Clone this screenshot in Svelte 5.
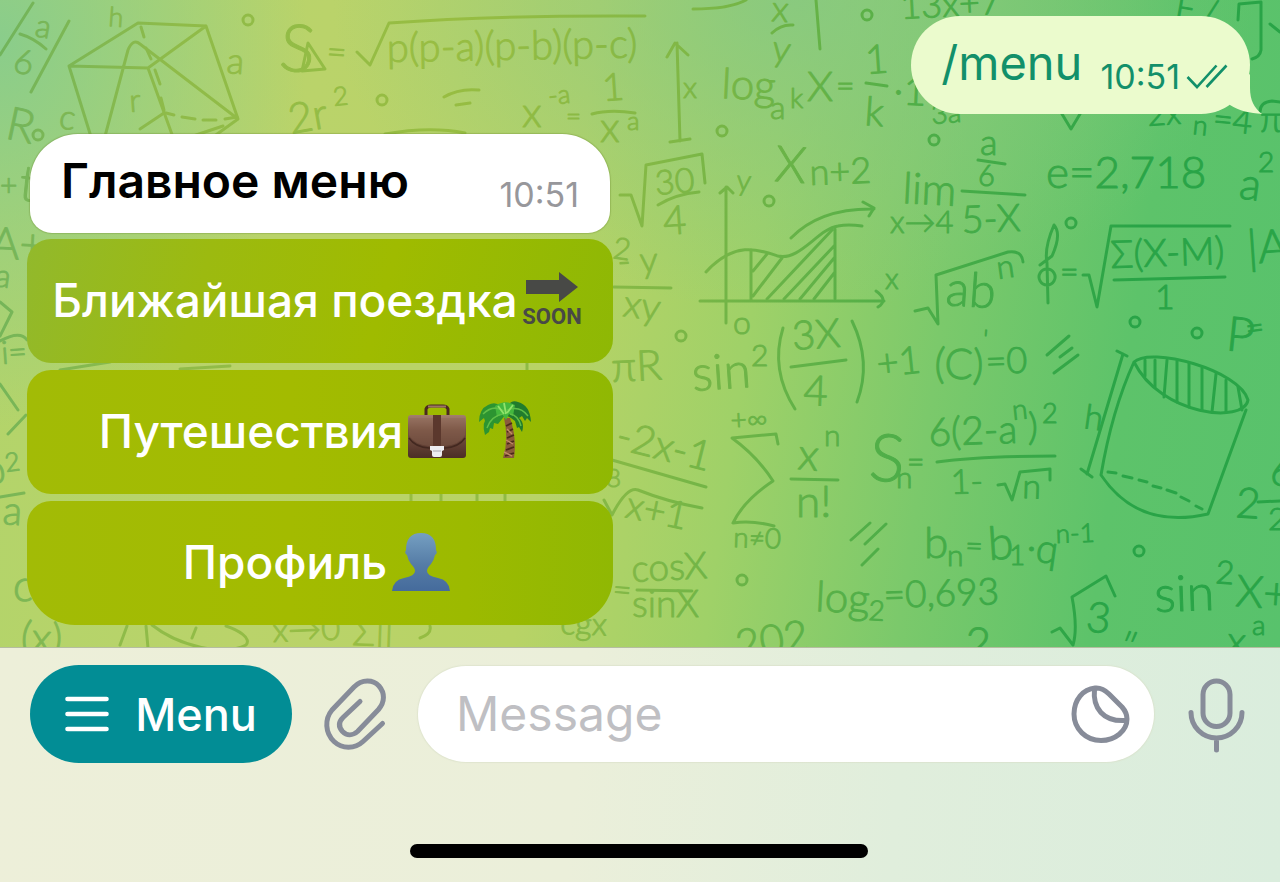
<script>
  let draft = $state('');

  // Formulas scattered over the chat wallpaper: x, baseline y, size, text, tilt
  const formulas = [
    [34, 36, 32, 'a', 10], [12, 72, 34, '6', 10], [4, 138, 46, 'R', 12], [58, 128, 34, 'c', 8],
    [108, 26, 27, 'h', 4], [130, 112, 32, 'r', -4], [226, 73, 36, 'a', 4], [278, 70, 66, 'S', 5],
    [326, 63, 34, '=', 4], [387, 62, 40, 'p(p-a)(p-b)(p-c)', -1],
    [291, 134, 42, '2r', -10], [334, 106, 26, '2', -6],
    [522, 127, 42, 'x', 0], [549, 105, 26, '-a', -6], [566, 125, 26, '=', 0], [603, 101, 38, '1', -4],
    [600, 142, 42, 'x', 0], [627, 130, 26, 'a', 0], [683, 98, 30, 'x', 0],
    [721, 98, 42, 'log', 3], [770, 119, 32, 'a', 0], [790, 108, 28, 'k', 0], [807, 101, 42, 'X', 0],
    [836, 97, 32, '=', 0], [866, 74, 40, '1', -4], [864, 125, 40, 'k', 4], [893, 104, 40, '·10', 3],
    [771, 21, 36, 'x', 4], [771, 60, 36, 'y', 8], [901, 19, 36, '13x+7', -3],
    [932, 124, 28, '3a', -4], [1148, 126, 32, '2x', -4], [1192, 134, 27, 'n', 6], [1212, 130, 34, '=4', 6], [1260, 132, 36, 'π', 0],
    [1174, 18, 34, 'F /', 10], [656, 195, 34, '30', -5], [664, 235, 40, '4', -4],
    [774, 181, 50, 'X', 4], [810, 185, 36, 'n+2', -2], [736, 190, 29, 'y', 4],
    [902, 203, 43, 'lim', 3], [890, 233, 31, 'x→4', 0], [980, 155, 36, 'a', 0], [978, 186, 29, '6', 0],
    [962, 233, 38, '5-X', -2], [1046, 188, 44, 'e=2,718', 0], [1238, 198, 44, 'a', 8], [1258, 172, 28, '2 -', 0],
    [612, 258, 30, '2', 8], [618, 274, 36, '- y', -3], [622, 316, 38, 'xy', 8],
    [733, 334, 32, 'o', 0], [885, 289, 29, 'x', 0], [693, 391, 49, 'sin', -4], [751, 366, 30, '2', 0],
    [793, 350, 40, '3X', -4], [803, 405, 42, '4', 2], [878, 377, 38, '+1', -6],
    [934, 378, 42, '(C)', 2], [982, 348, 26, "'", 5], [986, 374, 36, '=0', -2],
    [945, 305, 48, 'ab', 4], [998, 279, 32, 'n', -8], [1060, 283, 32, '=', 0],
    [1111, 268, 38, 'Σ(X-M)', -2], [1155, 309, 34, '1', 0], [1248, 264, 46, '|A', -4],
    [1225, 350, 48, 'P', 6], [1247, 340, 32, '=', -8], [1083, 428, 34, 'h', 8], [612, 382, 42, 'πR', -3],
    [614, 448, 41, '-2x-1', 14], [606, 487, 26, '8', 0], [624, 517, 38, 'x+1', 12],
    [731, 430, 28, '+∞', -3], [797, 469, 44, 'x', 5], [824, 446, 30, 'n', 0], [796, 517, 44, 'n!', 0],
    [733, 547, 28, 'n≠0', 2], [868, 480, 66, 'S', 4], [896, 488, 30, 'n', 0], [907, 472, 30, '=', 0],
    [929, 446, 39, '6(2-a', -2], [1013, 420, 28, 'n', -6], [1028, 440, 38, ')', 0], [1042, 423, 27, '2', 0],
    [951, 494, 34, '1-', -2], [1022, 498, 34, 'n', 2],
    [924, 558, 44, 'b', 0], [947, 566, 30, 'n', 0], [965, 556, 30, '=', 2], [989, 560, 46, 'b', -4], [1009, 565, 28, '1', 0],
    [1025, 560, 40, '·q', 8], [1056, 543, 26, 'n-1', -2],
    [815, 611, 42, 'log', 3], [868, 620, 28, '2', 3], [884, 608, 37, '=0,693', -2],
    [1155, 612, 50, 'sin', -2], [1215, 583, 32, '2', 4], [1235, 606, 44, 'X+', 4],
    [1085, 631, 42, '3', 6], [1226, 654, 40, 'x', 5], [1252, 635, 28, 'a', 0], [964, 658, 44, '2', 4], [738, 660, 42, '202', -9],
    [1235, 517, 42, '2', 4], [1268, 530, 32, '2', 0], [1270, 486, 40, '6', 0],
    [632, 582, 37, 'cosX', -3], [612, 600, 32, '=', 5], [632, 617, 37, 'sinX', 0],
    [0, 196, 30, '+', 0], [18, 200, 50, 't', 6], [-10, 258, 44, 'A+', 3], [-6, 286, 32, 'a', 8], [2, 364, 32, 'i=', -4],
    [-14, 486, 40, 'b', -12], [6, 472, 26, '2', -8], [2, 524, 40, 'a', 4], [12, 600, 44, 'c', 5],
    [20, 651, 42, '(x)', 4], [273, 642, 33, 'x→0', -2], [352, 645, 38, 'Σ||', 2], [560, 634, 32, 'cgx', 2],
    [1120, 656, 32, '″', 8]
  ];

  const dots = [
    [248, 20, 5], [38, 135, 5], [382, 100, 5], [722, 131, 5], [769, 201, 5], [681, 336, 5], [867, 15, 5],
    [934, 140, 5], [1071, 223, 5], [1135, 322, 5], [1197, 333, 5], [1139, 551, 5], [742, 580, 5]
  ];

  const strokes = [
    // ratio bars on the left edge and the prism
    'M33 3 L0 55 M69 21 L31 92 M20 34 Q34 38 46 49',
    'M69 66 L138 23 L206 26 L238 119 L195 150 M69 66 L92 140 M69 66 L148 68 L206 26 M148 68 L174 140 M104 140 L128 50 Q133 38 140 44 L238 119',
    'M141 27 L144 37 M146 48 L151 59 M155 70 L160 84 M161 98 L164 110 M164 113 L140 129 M166 113 L174 115 M182 117 L195 119 M203 120 L216 120 M225 119 L237 117 M223 126 L193 136',
    // roots, fraction bars and arrows in the upper band
    'M308 43 L302 71 L325 69 Z M357 52 L370 65 L389 23 Q500 15 645 16',
    'M385 134 Q430 126 465 133 M444 97 Q459 88 479 90 M456 105 L470 103 M592 114 Q610 109 635 113',
    'M677 43 L680 141 M667 57 L675 43 L688 55 M670 142 L690 139 M772 33 Q781 24 793 25 M693 9 Q730 9 746 0 M816 0 L820 49',
    'M866 83 L887 86 M1238 20 L1239 4 L1261 2 V50 Q1260 57 1252 59 M1270 24 L1280 32',
    'M1062 114 L1071 129 L1080 114 M1260 112 Q1260 102 1272 101 L1280 102',
    'M620 195 L631 195 L642 226 L646 165 L702 154 L705 183 M658 205 Q676 194 699 192',
    'M978 160 L1005 164 M962 191 L1025 195',
    // shaded area under a curve
    'M726 323 V187 M720 193 L727 187 L733 193 M700 301 H884 M876 291 Q889 300 878 307',
    'M706 272 C735 240 760 250 778 256 C800 261 818 229 838 226 Q848 224 862 226 M791 238 Q820 208 874 209 M863 202 L874 208 L869 216',
    'M751 250 V300 M835 229 V299 M753 271 L767 254 M753 296 L782 258 M767 299 L832 230 M784 299 L835 245 M800 299 L835 257 M814 299 L835 272',
    // roots and brackets at the right
    'M915 311 L928 308 L938 324 L936 275 L1008 252 Q1022 250 1023 262 M1048 303 L1047 263 Q1044 248 1054 225 Q1062 234 1052 256 L1040 265 M1047 269 a8 8 0 1 0 .1 0',
    'M1083 275 L1089 275 L1097 307 L1111 226 L1230 226 M1114 280 L1225 277',
    'M783 328 Q770 370 795 409 M852 321 Q872 362 857 402 M791 367 L846 360',
    'M1047 355 L1069 336 M1060 357 L1072 348 M1054 373 L1078 355',
    'M614 287 L671 288',
    // cylinder
    'M1134 362 C1150 346 1240 370 1248 400 C1244 424 1161 416 1134 362 Q1112 410 1101 475 Q1138 530 1208 514 L1246 410',
    'M1145 360 V376 M1155 360 V387 M1167 360 L1164 397 M1177 361 V402 M1189 363 V407 M1202 368 V410 M1216 374 L1212 412 M1226 380 V412 M1238 387 L1242 410',
    'M1117 351 L1127 356 M1123 354 L1087 474 M1081 469 L1092 477 M1108 472 L1116 473 M1123 476 L1132 478 M1139 480 L1147 482 M1153 486 L1161 488 M1167 490 L1176 493 M1181 497 L1189 501 M1196 506 L1202 509',
    // sums and quotients in the lower band
    'M778 444 L776 434 L732 438 Q757 456 773 481 Q744 500 733 523 Q752 520 774 526 M791 479 L838 480',
    'M612 460 L706 487 M604 500 L612 515 Q627 486 638 490 Q668 502 702 508 M637 590 L692 591',
    'M937 462 Q980 456 1055 456 M998 485 L1005 484 L1012 500 L1020 472 L1050 469 V480',
    'M851 540 L870 523 M865 544 L886 524 M862 565 L878 549 M1258 502 L1280 501',
    'M1052 632 L1060 628 L1073 645 Q1078 628 1072 597 L1106 576 L1115 596',
    // left edge
    'M0 302 L12 312 L0 336 M0 341 Q20 330 27 340 M0 384 L18 410 M8 434 L26 415 M0 497 L24 493',
    'M120 645 L127 626 M146 626 L148 648 M152 625 C180 647 224 656 246 645 C252 638 238 630 226 626 M192 638 L196 628 M60 370 L110 362 M180 369 L230 366',
    'M411 494 V502 M441 494 V502 M477 494 V502 M505 494 V502 M527 363 V370 M420 638 Q432 634 430 626'
  ];

  const actions = [
    { label: 'Ближайшая поездка', icons: ['soon'] },
    { label: 'Путешествия', icons: ['briefcase', 'palm'] },
    { label: 'Профиль', icons: ['person'] }
  ];
</script>

<main class="chat">
  <section class="messages">
    <svg class="wallpaper" viewBox="0 0 1280 647" preserveAspectRatio="xMinYMin slice" aria-hidden="true">
      <defs>
        <linearGradient id="ink" gradientUnits="userSpaceOnUse" x1="0" y1="0" x2="1280" y2="120">
          <stop offset="0" stop-color="#70b45c" />
          <stop offset="0.14" stop-color="#8fbb49" />
          <stop offset="0.35" stop-color="#98bd42" />
          <stop offset="0.52" stop-color="#83b846" />
          <stop offset="0.72" stop-color="#4fae48" />
          <stop offset="0.9" stop-color="#29a447" />
        </linearGradient>
      </defs>
      <g fill="none" stroke="url(#ink)" stroke-width="3" stroke-linecap="round" stroke-linejoin="round">
        {#each strokes as d}<path {d} />{/each}
        {#each dots as [x, y, r]}<circle cx={x} cy={y} {r} />{/each}
      </g>
      <g class="formulas" fill="url(#ink)" stroke="url(#ink)">
        {#each formulas as [x, y, size, text, tilt]}
          <text {x} {y} font-size={size} transform={`rotate(${tilt} ${x} ${y})`}>{text}</text>
        {/each}
      </g>
    </svg>

    <article class="bubble outgoing">
      <a class="command" href="#menu">/menu</a>
      <span class="status">
        <time>10:51</time>
        <svg width="42" height="26" viewBox="0 0 42 26" role="img" aria-label="Read">
          <path d="M1.500 13 L11 23 L30.500 1.500 M20.500 23 L40.500 1.500" fill="none" stroke="#12906a" stroke-width="2.600" />
        </svg>
      </span>
      <svg class="tail" width="40" height="40" viewBox="0 0 40 40" aria-hidden="true">
        <path d="M28 0 V14 C28 26 32 34 40 40 C28 39 17 37 8 31 L0 20 Z" fill="#ebfbcd" />
      </svg>
    </article>

    <div class="reply">
      <article class="bubble incoming">
        <strong>Главное меню</strong>
        <time>10:51</time>
      </article>

      <div class="keyboard">
        {#each actions as action}
          <button type="button" class="action">
            <span>{action.label}</span>
            {#each action.icons as icon}
              <svg class="emoji" width="60" height="60" viewBox="0 0 60 60" aria-hidden="true">
                {#if icon === 'soon'}
                  <path d="M4 10 H37 V2 L56 17 L37 32 V24 H4 Z" fill="#484946" />
                  <text x="30" y="54" class="soon" text-anchor="middle">SOON</text>
                {:else if icon === 'briefcase'}
                  <defs>
                    <linearGradient id="leather" x1="0" y1="0" x2="0" y2="1">
                      <stop offset="0" stop-color="#a37f6e" />
                      <stop offset="0.35" stop-color="#795444" />
                      <stop offset="1" stop-color="#4c2e26" />
                    </linearGradient>
                  </defs>
                  <path d="M19 14 V8 Q20 5 24 5 H36 Q40 5 41 8 V14" fill="none" stroke="#4b2a20" stroke-width="3" />
                  <path d="M21 5.500 H39" stroke="#9b7562" stroke-width="2" />
                  <rect x="1" y="14" width="58" height="43" rx="3" fill="url(#leather)" />
                  <path d="M2 37 Q8 46 22 47 H38 Q52 46 58 37" fill="none" stroke="#432820" stroke-width="1.500" />
                  <path d="M2 17 V34 Q8 44 22 45 H38 Q52 44 58 34 V17" fill="#8a6554" opacity="0.350" />
                  <rect x="26" y="14" width="8" height="32" fill="#5b382d" />
                  <path d="M23 45 H37 V49 L35 50 V54 Q35 56 33 56 H27 Q25 56 25 54 V50 L23 49 Z" fill="#ededf1" />
                  <path d="M26 50 H34" stroke="#a6a6ad" stroke-width="1" />
                {:else if icon === 'palm'}
                  <path d="M29 17 L35 17 Q42 37 39 57 H28 Q34 38 29 17 Z" fill="#8b5a3c" />
                  <path d="M31 25 L37 22 M32 31 L38 28 M32 37 L39 34 M32 43 L39 40 M31 49 L39 46 M30 55 L39 52" stroke="#4c2a1b" stroke-width="1.800" />
                  <path d="M29 51 L37 55 M31 39 L38 43 M32 28 L37 33" stroke="#c08a65" stroke-width="1.400" />
                  <path d="M31 13 Q24 -2 13 4 Q4 8 4 21 L9 17 L10 20 L14 14 Q6 21 10 34 L14 31 L15 27 L18 28 L19 22 L23 23 Z" fill="#2c9431" />
                  <path d="M29 13 Q34 -3 43 1 Q55 4 56 21 L52 17 L50 20 L47 15 L44 17 Q50 22 47 31 L44 26 L42 27 L40 20 L36 17 Z" fill="#217c2d" />
                  <path d="M20 5 Q30 -2 40 4 L38 15 L34 13 L31 19 L27 13 L22 16 Z" fill="#43b83e" />
                  <path d="M29 10 Q18 3 8 13 M28 13 Q16 15 12 27 M32 9 Q45 4 53 15 M35 13 Q43 14 46 25" fill="none" stroke="#5fbf48" stroke-width="1.500" />
                  <path d="M29 2 L31 13 M23 5 L29 13 M38 4 L32 12" stroke="#8fe36a" stroke-width="1.800" />
                {:else}
                  <defs>
                    <linearGradient id="figure" x1="0" y1="0" x2="0" y2="1">
                      <stop offset="0" stop-color="#759fc1" />
                      <stop offset="0.55" stop-color="#557ca6" />
                      <stop offset="1" stop-color="#456b9c" />
                    </linearGradient>
                  </defs>
                  <path d="M1 59 Q2 48 13 46 Q24 44 24 39 Q24 36 20 32 Q17 28 16 23 Q13 21 15 18 Q15 1 30 1 Q45 1 45 18 Q47 21 44 23 Q43 28 40 32 Q36 36 36 39 Q36 44 47 46 Q58 48 59 59 Z" fill="url(#figure)" />
                {/if}
              </svg>
            {/each}
          </button>
        {/each}
      </div>
    </div>
  </section>

  <footer class="composer">
    <form class="bar" onsubmit={(event) => event.preventDefault()}>
      <button type="button" class="menu">
        <svg width="44" height="36" viewBox="0 0 44 36" aria-hidden="true">
          <path d="M2.500 3 H41.500 M2.500 18 H41.500 M2.500 33 H41.500" stroke="#fff" stroke-width="4.600" stroke-linecap="round" />
        </svg>
        <span>Menu</span>
      </button>
      <button type="button" class="icon" aria-label="Attach a file">
        <svg width="70" height="80" viewBox="0 0 70 80" aria-hidden="true">
          <path d="M62.500 49.500 L43 67.500 C35 75 22 75 14 67.500 C5 59 4.500 45 12 36 L34 13 C42 5 53 5.500 59 12 C65 19 65 28 58.500 35.500 L37.500 57.500 C32.500 62 26.500 61.500 22.500 57.500 C18.500 53 18.500 48 23 43.500 L40 27.500" />
        </svg>
      </button>
      <div class="field">
        <input type="text" placeholder="Message" aria-label="Message" bind:value={draft} />
        <button type="button" class="icon" aria-label="Stickers">
          <svg width="62" height="62" viewBox="0 0 62 62" aria-hidden="true">
            <path d="M25 5 C13 6 4 17 4 31 C4 46 16 57.500 31 57.500 C45 57.500 57 48 57 36 C57 31 55.500 28 52 24 L39 11 C34 6 30 4.500 25 5 Z M24.500 6 C22.500 25 33 39 56 37.500" />
          </svg>
        </button>
      </div>
      <button type="button" class="icon" aria-label="Record a voice message">
        <svg width="64" height="80" viewBox="0 0 64 80" aria-hidden="true">
          <path d="M19 20.500 a13.500 13.500 0 0 1 27 0 V39 a13.500 13.500 0 0 1 -27 0 Z M7 38.500 A25.500 25.500 0 0 0 58 38.500 M32.500 64.500 V76" />
        </svg>
      </button>
    </form>
    <div class="home"></div>
  </footer>
</main>

<style>
  :global(body) {
    margin: 0;
  }

  .chat {
    display: flex;
    flex-direction: column;
    min-height: 100vh;
    font-family: Inter, "Noto Sans", sans-serif;
  }

  button {
    margin: 0;
    padding: 0;
    border: 0;
    background: none;
    font: inherit;
    cursor: pointer;
  }

  .messages {
    position: relative;
    flex: 1;
    display: flex;
    flex-direction: column;
    gap: 20px;
    box-sizing: border-box;
    padding: 16px 30px 22px 27px;
    overflow: hidden;
    background:
      radial-gradient(ellipse 24% 60% at 0 6%, #8acd8b 0%, #8acd8b00 100%),
      radial-gradient(ellipse 36% 48% at 62% 0, #84c884cc 0%, #84c88400 100%),
      linear-gradient(98deg, #b2d46a 0%, #bad36a 24%, #b8d366 44%, #9fd168 58%, #7bc96b 72%, #5dc36a 86%, #58c26c 100%);
  }

  .wallpaper {
    position: absolute;
    inset: 0;
    width: 100%;
    height: 100%;
    font-family: Lato, sans-serif;
    font-weight: 300;
  }

  .formulas {
    stroke-width: 1px;
    stroke-linejoin: round;
  }

  .bubble {
    position: relative;
    display: flex;
    box-sizing: border-box;
    justify-content: space-between;
  }

  .outgoing {
    align-self: flex-end;
    gap: 18px;
    height: 98px;
    padding: 17px 22px 0 30px;
    border-radius: 49px;
    background: #ebfbcd;
    color: #12906a;
  }

  .command {
    color: inherit;
    font-size: 47px;
    line-height: 60px;
    text-decoration: none;
  }

  .status {
    display: flex;
    align-items: center;
    gap: 6px;
    height: 40px;
    margin-top: 24px;
  }

  time {
    font-size: 34px;
    line-height: 40px;
  }

  .tail {
    position: absolute;
    right: -12px;
    bottom: 0;
  }

  .reply {
    position: relative;
    display: flex;
    flex-direction: column;
    gap: 6px;
    width: min(586px, 100%);
  }

  .incoming {
    height: 99px;
    margin: 0 3px;
    padding: 17px 31px 0;
    border-radius: 48px 48px 22px 22px;
    background: #fff;
    box-shadow: 0 0 1px 1px #6b8a3055;
    color: #000;
  }

  .incoming strong {
    font-size: 48px;
    line-height: 60px;
    font-weight: 600;
  }

  .incoming time {
    margin-top: 24px;
    color: #97979b;
  }

  .keyboard {
    display: flex;
    flex-direction: column;
    gap: 7px;
  }

  .action {
    display: flex;
    align-items: center;
    justify-content: center;
    gap: 4px;
    box-sizing: border-box;
    height: 124px;
    padding: 0 6px 3px 0;
    border-radius: 24px;
    background: linear-gradient(90deg, #a2bb06 0%, #a3bb00 45%, #9cba00 75%, #90b803 100%);
    color: #fff;
    font-size: 46px;
    line-height: 56px;
    font-weight: 500;
  }

  .action:first-child {
    background: linear-gradient(105deg, #92b92c 0%, #9cba10 30%, #9fbb00 60%, #8eb805 100%);
  }

  .action:last-child {
    border-radius: 24px 24px 48px 48px;
  }

  .emoji {
    flex: none;
    overflow: visible;
  }

  .emoji + .emoji {
    margin-left: 4px;
  }

  .soon {
    fill: #484946;
    font-family: Roboto, "Liberation Sans", sans-serif;
    font-size: 22px;
    font-weight: 700;
  }

  .composer {
    display: flex;
    flex-direction: column;
    gap: 81px;
    padding: 17px 32px 24px 30px;
    border-top: 1px solid #b5bda0;
    background: linear-gradient(95deg, #edefd9 0%, #ebefda 45%, #e0eedc 70%, #daeddd 100%);
  }

  .bar {
    display: flex;
    align-items: center;
    height: 98px;
  }

  .menu {
    display: flex;
    align-items: center;
    justify-content: center;
    gap: 26px;
    flex: none;
    width: 262px;
    height: 98px;
    border-radius: 49px;
    background: #028d95;
    color: #fff;
    font-size: 45px;
    font-weight: 500;
  }

  .icon {
    flex: none;
    display: block;
  }

  .icon svg {
    display: block;
    fill: none;
    stroke: #878c99;
    stroke-width: 5;
    stroke-linecap: round;
    stroke-linejoin: round;
  }

  .bar > .icon {
    margin: 0 28px;
  }

  .bar > .icon:last-child {
    margin: 0 0 0 30px;
  }

  .field {
    flex: 1;
    min-width: 0;
    display: flex;
    align-items: center;
    box-sizing: border-box;
    height: 96px;
    padding: 0 22px 0 38px;
    border-radius: 48px;
    background: #fff;
    box-shadow: 0 0 1px 1px #d9dfc899;
  }

  input {
    flex: 1;
    min-width: 0;
    padding: 0;
    border: 0;
    outline: 0;
    background: none;
    color: #000;
    font: inherit;
    font-size: 48px;
    line-height: 60px;
  }

  input::placeholder {
    color: #bfbfc3;
    opacity: 1;
  }

  .home {
    align-self: center;
    width: 458px;
    max-width: 80%;
    height: 14px;
    border-radius: 7px;
    background: #000;
  }
</style>
